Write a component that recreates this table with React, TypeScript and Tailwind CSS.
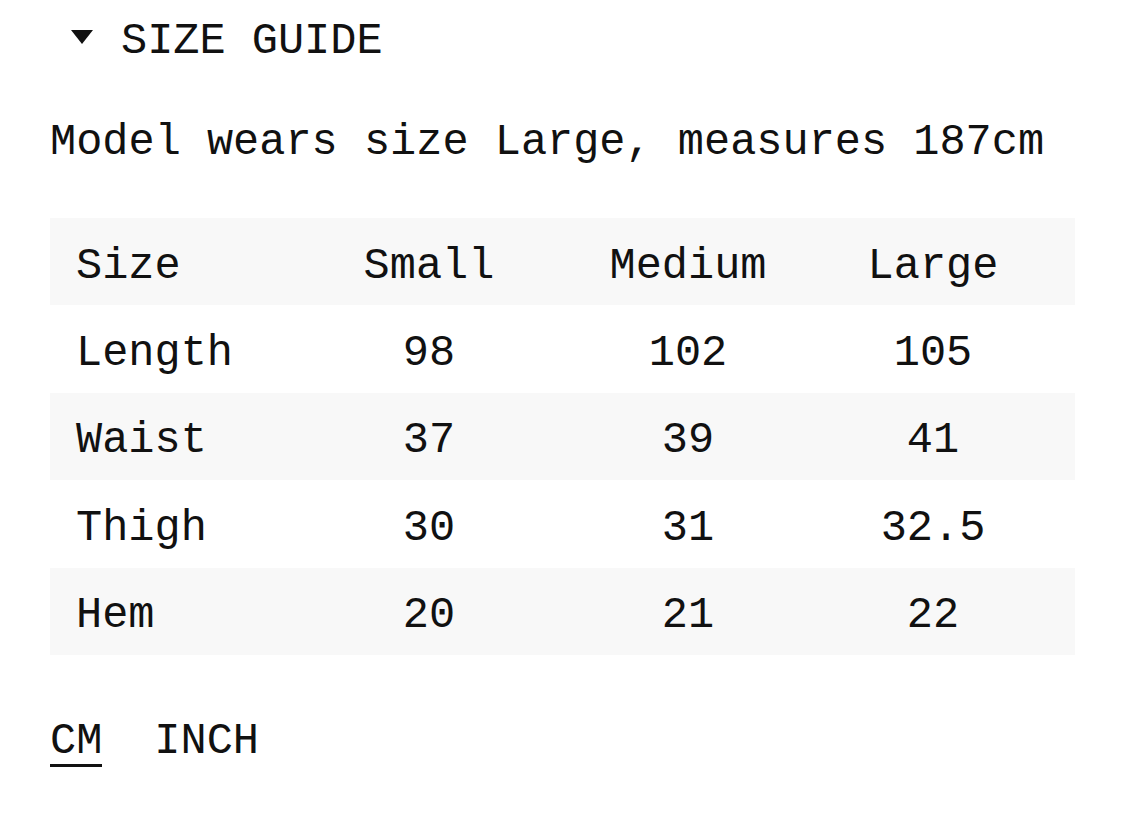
export default function App() {
  const rows = [
    ["Size", "Small", "Medium", "Large"],
    ["Length", "98", "102", "105"],
    ["Waist", "37", "39", "41"],
    ["Thigh", "30", "31", "32.5"],
    ["Hem", "20", "21", "22"],
  ];
  return (
    <div
      className="w-[1125px] h-[824px] bg-white text-[#111] px-[50px] overflow-hidden"
      style={{ fontFamily: '"Liberation Mono", "DejaVu Sans Mono", monospace' }}
    >
      <div className="h-[78px] flex items-center text-[43.6px] leading-[44px]">
        <svg width="22" height="14" viewBox="0 0 22 14" className="ml-[21px] mr-[28px] -mt-[4px]">
          <polygon points="0,0 22,0 11,14" fill="#111" />
        </svg>
        <span className="pt-[5px]">SIZE GUIDE</span>
      </div>
      <div className="mt-[43px] text-[43.6px] leading-[44px] whitespace-nowrap">
        Model wears size Large, measures 187cm
      </div>
      <div className="mt-[53px] w-[1025px] flex flex-col">
        {rows.map((r, i) => (
          <div
            key={i}
            className={`grid grid-cols-[223px_312px_206px_284px] h-[87.4px] items-center pt-[10px] text-[43.6px] leading-[44px] ${
              i % 2 === 0 ? "bg-[#f8f8f8]" : "bg-white"
            }`}
          >
            <div className="pl-[26px]">{r[0]}</div>
            <div className="text-center">{r[1]}</div>
            <div className="text-center">{r[2]}</div>
            <div className="text-center">{r[3]}</div>
          </div>
        ))}
      </div>
      <div className="mt-[65px] flex text-[43.6px] leading-[44px]">
        <span className="border-b-[3px] border-[#111]">CM</span>
        <span className="ml-[52px]">INCH</span>
      </div>
    </div>
  );
}
